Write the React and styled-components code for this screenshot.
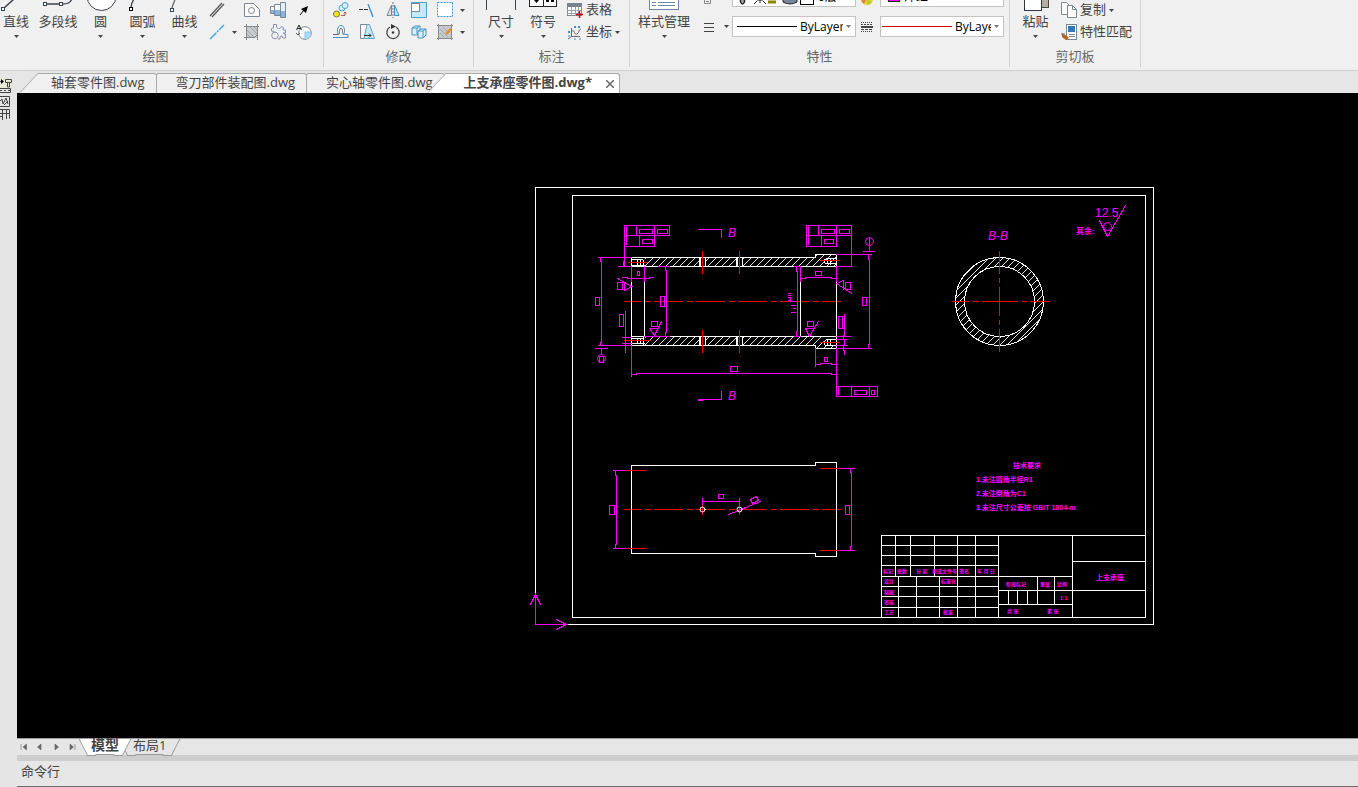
import { useState } from "react";
import styled, { createGlobalStyle } from "styled-components";

const GlobalStyle = createGlobalStyle`
  * {
    box-sizing: border-box;
  }

  body {
    margin: 0;
    font-family: "Open Sans", "Noto Sans CJK SC", sans-serif;
    font-size: 13px;
    color: #444;
    background: #e6e6e6;
  }

  button,
  select {
    font: inherit;
    color: inherit;
  }
`;

const AppStyle = styled.div`
  display: flex;
  flex-direction: column;
  min-height: 100vh;
`;

const Ribbon = styled.header`
  display: flex;
  height: 71px;
  background: #f0f0f0;
  border-bottom: 1px solid #d0d0d0;
  overflow: hidden;
`;

const Panel = styled.section`
  display: flex;
  flex-direction: column;
  flex: none;
  width: ${(p) => p.$w}px;
  height: 67px;
  border-right: 1px solid #d4d4d4;
`;

const PanelBody = styled.div`
  display: flex;
  height: 47px;
  padding-left: ${(p) => p.$pad || 0}px;
`;

const Caption = styled.div`
  height: 20px;
  line-height: 18px;
  padding-right: ${(p) => p.$shift || 0}px;
  text-align: center;
  color: #666;
`;

const PlainButton = styled.button`
  display: flex;
  align-items: center;
  padding: 0;
  border: 0;
  background: transparent;
  white-space: nowrap;
`;

const BigButton = styled(PlainButton)`
  flex: none;
  flex-direction: column;
  width: ${(p) => p.$w}px;
  height: 42px;

  > svg:first-child {
    flex: none;
    width: 40px;
    height: 13px;
  }

  span {
    height: 18px;
    margin-bottom: 4px;
    line-height: 16px;
  }
`;

const IconGrid = styled.div`
  display: grid;
  grid-template-columns: ${(p) => p.$cols};
  grid-template-rows: 20px 24px;
  margin-left: ${(p) => p.$ml}px;
`;

const IconButton = styled(PlainButton)`
  gap: 7px;
`;

const TextTools = styled.div`
  display: grid;
  grid-template-rows: 20px 24px;
  justify-items: start;
  margin-left: ${(p) => p.$ml || 0}px;
`;

const TextButton = styled(PlainButton)`
  gap: 3px;

  span {
    padding-bottom: 2px;
    line-height: 16px;
  }
`;

const PropGrid = styled.div`
  display: grid;
  grid-template-columns: 28px 124px 24px 124px;
  grid-template-rows: 7px 21px;
  row-gap: 9px;
  align-items: end;
  margin-left: 6px;
  overflow: hidden;
`;

const PropIcon = styled.div`
  display: flex;
  align-items: center;
  justify-content: ${(p) => (p.$center ? "center" : "space-between")};
  height: 21px;
  padding-right: ${(p) => (p.$center ? 2 : 3)}px;
`;

const Combo = styled.label`
  display: flex;
  align-items: center;
  gap: 3px;
  height: 21px;
  padding: 0 4px;
  padding-left: ${(p) => p.$pl}px;
  border: 1px solid #c3c3c3;
  background: #fff;
  overflow: hidden;

  > svg {
    flex: none;
  }

  select {
    flex: 1;
    min-width: 0;
    height: 19px;
    padding: 0;
    border: 0;
    appearance: none;
    background: transparent;
    color: #000;
    font-size: 12px;
    line-height: 18px;
  }
`;

const Work = styled.div`
  display: flex;
  flex: 1;
`;

const Rail = styled.aside`
  flex: none;
  width: 17px;
  padding-top: 7px;
  background: #e5e5e5;
`;

const Main = styled.main`
  display: flex;
  flex-direction: column;
  flex: 1;
  min-width: 0;
`;

const FileTabs = styled.nav`
  display: flex;
  align-items: flex-end;
  height: 22px;
  padding-left: 20px;
  background: #e6e6e6;
  overflow: hidden;
`;

const FileTab = styled.button`
  position: relative;
  z-index: ${(p) => p.$z};
  display: flex;
  align-items: center;
  height: 20px;
  padding: 0 11px 2px ${(p) => (p.$first ? 14 : 19)}px;
  border: 1px solid #a9a9a9;
  border-width: 1px 1px 0 0;
  border-top-right-radius: 3px;
  background: ${(p) => (p.$active ? "#fff" : "#f0f0f0")};
  font-weight: ${(p) => (p.$active ? 700 : 400)};
  line-height: 17px;
  white-space: nowrap;

  &::before {
    content: "";
    position: absolute;
    top: -1px;
    left: -9px;
    width: 18px;
    height: 20px;
    border: 1px solid #a9a9a9;
    border-width: 1px 0 0 1px;
    background: inherit;
    transform: skewX(-43deg);
  }

  span {
    position: relative;
  }
`;

const CloseMark = styled.svg`
  width: 8px;
  height: 8px;
  margin: 2px -6px 0 14px;
`;

const Canvas = styled.div`
  display: flex;
  flex: 1;
  background: #000;

  svg {
    flex: 1;
    width: 100%;
    height: auto;
    min-width: 0;
  }
`;

const Sheets = styled.nav`
  display: flex;
  height: 17px;
  border-top: 1px solid #9a9a9a;
  background: #e6e6e6;
`;

const SheetNav = styled.div`
  display: flex;
  align-items: center;
  gap: 7px;
  width: 66px;
  padding-left: 2px;
`;

const SheetTab = styled.button`
  position: relative;
  z-index: ${(p) => (p.$active ? 1 : 0)};
  height: 16px;
  margin-left: 4px;
  padding: 0 ${(p) => (p.$active ? 4 : 6)}px;
  border: 0;
  border-bottom: 1px solid #999;
  background: ${(p) => (p.$active ? "#fff" : "#e6e6e6")};
  font-size: ${(p) => (p.$active ? 14 : 13)}px;
  font-weight: ${(p) => (p.$active ? 700 : 400)};
  line-height: 12px;

  &::before,
  &::after {
    content: "";
    position: absolute;
    top: 0;
    width: 8px;
    height: 16px;
    border-bottom: 1px solid #999;
    background: inherit;
  }

  &::before {
    left: -4px;
    border-left: 1px solid #999;
    transform: skewX(27deg);
  }

  &::after {
    right: -4px;
    border-right: 1px solid #999;
    transform: skewX(-27deg);
  }

  span {
    position: relative;
    z-index: 1;
    display: block;
    height: 15px;
  }
`;

const Splitter = styled.div`
  height: 6px;
  background: #cdcdcd;
`;

const CommandLine = styled.div`
  height: 26px;
  padding-left: 4px;
  border-bottom: 1px solid #6d6d6d;
  line-height: 20px;
`;

const Caret = ({ color = "#444" }) => (
  <svg width="5" height="3" viewBox="0 0 5 3">
    <path d="M0 0h5L2.5 3z" fill={color} />
  </svg>
);

const Icon = ({ children }) => (
  <svg width="16" height="16" viewBox="0 0 16 16" fill="none" stroke="#7d8794">
    {children}
  </svg>
);

const BigIcon = ({ children }) => (
  <svg viewBox="0 0 40 13" fill="none" stroke="#3c424c">
    {children}
  </svg>
);

const drawBig = [
  {
    name: "直线",
    w: 32,
    icon: (
      <>
        <path d="M8 8L18 -1" strokeWidth="1.5" />
        <rect x="5.500" y="7.500" width="3" height="3" fill="#fff" />
      </>
    ),
  },
  {
    name: "多段线",
    w: 52,
    noArrow: true,
    icon: (
      <>
        <path d="M8 4h16M24 4c6 0 8 -1 10 -5" strokeWidth="1.3" />
        <rect x="5.500" y="2.500" width="3" height="3" fill="#fff" />
        <rect x="21.500" y="2.500" width="3" height="3" fill="#fff" />
      </>
    ),
  },
  {
    name: "圆",
    w: 33,
    icon: <circle cx="20.500" cy="-4" r="14.500" fill="#fff" />,
  },
  {
    name: "圆弧",
    w: 51,
    icon: (
      <>
        <path d="M8 8c0-3 1-6 3-9" strokeWidth="1.3" />
        <rect x="6.500" y="7.500" width="3" height="3" fill="#fff" stroke="#000" />
      </>
    ),
  },
  {
    name: "曲线",
    w: 33,
    icon: (
      <>
        <path d="M7 9c0-4 2-5 3-10" strokeWidth="1.3" stroke="#666" />
        <rect x="5.500" y="8.500" width="3" height="3" fill="#fff" />
      </>
    ),
  },
];

const drawSmall = [
  {
    name: "平行线",
    icon: <path d="M1 14L13 1M3 15L15 2" stroke="#555" strokeWidth="1.2" />,
  },
  {
    name: "轮廓",
    icon: (
      <>
        <path d="M.5 1.500h9l6 6v7H.5z" fill="#fafafa" />
        <circle cx="7.500" cy="8.500" r="3" />
      </>
    ),
  },
  {
    name: "轴",
    icon: (
      <>
        <path d="M.5 4.500h4v7h-4zM4.500 2.500h6v11h-6z" fill="#f4f8fc" />
        <path d="M10.500 .5h5v15h-5z" fill="#e6f1fa" />
        <path d="M1 8h3v3H1zM5 8h5v5H5zM11 9h4v6h-4z" fill="#86b4de" stroke="none" />
      </>
    ),
  },
  {
    name: "箭头",
    icon: (
      <>
        <path d="M4 13L8 8" stroke="#000" />
        <path d="M12 4L10 11 5 7z" fill="#000" stroke="none" />
      </>
    ),
  },
  {
    name: "中心线",
    arrow: true,
    icon: (
      <path d="M1 15L15 1" stroke="#2fa8e0" strokeWidth="1.4" strokeDasharray="9 1 2 1" />
    ),
  },
  {
    name: "剖面线",
    icon: (
      <>
        <rect x="2" y="2" width="11" height="12" fill="#c6cacc" stroke="none" />
        <path d="M0 2.500h15M2.500 0v16M0 13.500h10M13.500 0v16M10 14l4-4" stroke="#888" />
        <path d="M3 6l7 7M3 10l3 3M6 3l7 7M10 3l3 3" stroke="#999" strokeWidth=".7" />
      </>
    ),
  },
  {
    name: "齿轮",
    icon: (
      <>
        <path
          d="M1.500 7V4.500l2-.5V.5h3V3l2 2 2-1 1-1.500 2 1L13 6h2.500v3H13l1 1h1.500v4H13l-1-2-2 1v2H8"
          fill="#eef1f8"
          stroke="#8792a8"
        />
        <path d="M1.500 7l3 1" stroke="#8792a8" />
        <circle cx="5" cy="11.500" r="3.300" fill="#f0f0f0" stroke="#8792a8" />
      </>
    ),
  },
  {
    name: "局部放大",
    icon: (
      <>
        <circle cx="9" cy="9" r="6.300" fill="#f7f9fb" />
        <path d="M9 8h6a6 6 0 0 1-6 7z" fill="#a5dcf7" stroke="none" />
        <path d="M9 15V8h6" stroke="#8fc3dd" />
        <path d="M.5 6L3 1l2.500 5M1.500 4.500h3" stroke="#222" />
        <path d="M0 9l2 2 2-2" stroke="#555" />
      </>
    ),
  },
];

const modifySmall = [
  {
    name: "复制对象",
    icon: (
      <>
        <circle cx="9" cy="6" r="3" fill="#d7effb" stroke="#4ea3d6" />
        <circle cx="12" cy="3.500" r="3" fill="#d7effb" stroke="#4ea3d6" />
        <circle cx="3.500" cy="12" r="3" fill="#ffe800" stroke="#777" />
        <path d="M8 13.500h4V10M10.500 11.500L12 10l1.500 1.500" stroke="#a55" />
      </>
    ),
  },
  {
    name: "修剪",
    icon: (
      <>
        <path d="M0 7.500h10" stroke="#333" strokeDasharray="4 1" />
        <path d="M9 2l5 13" stroke="#2786c8" strokeWidth="1.200" />
      </>
    ),
  },
  {
    name: "镜像",
    icon: (
      <>
        <path d="M6.500 3v10.500H2z" fill="#ddd" />
        <path d="M9.500 3v10.500H14z" fill="#c5e6f8" stroke="#4590c0" />
        <path d="M8 0v16" stroke="#777" strokeDasharray="2 1" />
      </>
    ),
  },
  {
    name: "缩放",
    icon: (
      <>
        <rect x=".5" y=".5" width="15" height="15" fill="#c6e9fa" stroke="#5a9dc8" />
        <rect x=".5" y="1.500" width="8" height="8" fill="#fff" />
      </>
    ),
  },
  {
    name: "拉伸",
    arrow: true,
    icon: (
      <rect x=".5" y=".5" width="15" height="14" fill="#fff" stroke="#4795c8" strokeDasharray="2 1" />
    ),
  },
  {
    name: "偏移",
    icon: (
      <>
        <path d="M0 13.500h15v-3h-3c-2 0 0-3-.5-5s-1-4-3.500-4-3 2-3.500 4 1.500 5-.5 5H0" stroke="#4e8eb8" />
        <path d="M0 10.500h5c3 0 0-6 3-6s0 6 3 6" stroke="#666" />
      </>
    ),
  },
  {
    name: "移动边",
    icon: (
      <>
        <path d="M1.500 .5h7v14h-7z" fill="#f8f8f8" />
        <path d="M8 .5h2.500l5 14H5z" fill="#c6e9f9" stroke="#65a5c9" />
        <path d="M5 11.500h7M10 9.500l2 2-2 2" stroke="#333" />
      </>
    ),
  },
  {
    name: "旋转",
    icon: (
      <>
        <path d="M5 3a6.200 6.200 0 1 0 6 0" stroke="#444" strokeWidth="1.300" />
        <circle cx="8" cy="8.500" r="1.200" fill="#333" stroke="none" />
        <path d="M6 0l5 2.500L6 5z" fill="#333" stroke="none" />
      </>
    ),
  },
  {
    name: "阵列",
    icon: (
      <>
        <path d="M1 4l3-2h5v6l-3 3H1zM1 4h5v6M6 4l3-2" fill="#d9f1fc" stroke="#4b94bf" />
        <path d="M7 7l3-2h5v6l-3 3H7zM7 7h5v6M12 7l3-2" fill="#d9f1fc" stroke="#4b94bf" />
      </>
    ),
  },
  {
    name: "编辑填充",
    arrow: true,
    icon: (
      <>
        <rect x="2" y="2" width="12" height="12" fill="#c6cacc" stroke="none" />
        <path d="M0 1.500h16M1.500 0v16M0 14.500h16M14.500 0v16" stroke="#888" />
        <path d="M3 5l8 8M3 9l4 4M6 3l4 4" stroke="#999" strokeWidth=".7" />
        <path d="M9 10l5-5" stroke="#e0912c" strokeWidth="2.500" />
      </>
    ),
  },
];

const SmallTools = ({ items }) =>
  items.map((t) => (
    <IconButton key={t.name} type="button" aria-label={t.name}>
      <Icon>{t.icon}</Icon>
      {t.arrow && <Caret />}
    </IconButton>
  ));

const BigTool = ({ name, w, icon, noArrow }) => (
  <BigButton type="button" $w={w}>
    <BigIcon>{icon}</BigIcon>
    <span>{name}</span>
    {!noArrow && <Caret />}
  </BigButton>
);

const TopRibbon = () => (
  <Ribbon>
    <Panel $w={324}>
      <PanelBody>
        {drawBig.map((t) => (
          <BigTool key={t.name} {...t} />
        ))}
        <IconGrid $ml={8} $cols="35px 26px 26px 26px">
          <SmallTools items={drawSmall} />
        </IconGrid>
      </PanelBody>
      <Caption $shift={12}>绘图</Caption>
    </Panel>

    <Panel $w={150}>
      <PanelBody>
        <IconGrid $ml={9} $cols="26px 26px 26px 26px 28px">
          <SmallTools items={modifySmall} />
        </IconGrid>
      </PanelBody>
      <Caption>修改</Caption>
    </Panel>

    <Panel $w={156}>
      <PanelBody $pad={6}>
        <BigTool name="尺寸" w={42} icon={<path d="M5.500 0v10M34.500 0v10" />} />
        <BigTool
          name="符号"
          w={42}
          icon={
            <>
              <rect x="6.500" y="-8" width="27" height="14.500" fill="#fff" stroke="#222" />
              <path d="M20.500 0v6" stroke="#222" />
              <path d="M11 0h5l-2.500 3zM23 0h3v2h-3zM28 0h3v2h-3z" fill="#000" stroke="none" />
            </>
          }
        />
        <TextTools $ml={3}>
          <TextButton type="button">
            <Icon>
              <rect x=".5" y="1.500" width="14" height="12" fill="#fff" />
              <path d="M0 1h15v4H0z" fill="#7b838d" stroke="none" />
              <path d="M0 8.500h15M0 11.500h15M4.500 5v9M8.500 5v9M11.500 5v9" stroke="#9aa2ac" />
              <path d="M12.500 9v7M9 12.500h7" stroke="#b5121b" strokeWidth="1.500" />
            </Icon>
            <span>表格</span>
          </TextButton>
          <TextButton type="button">
            <Icon>
              <path d="M4.500 4v8.500H13M4.500 12.500L1 15M5 7c3-2 2 5 5 3s1-4 4-5" stroke="#667" />
              <path d="M1 7l2 2M3 7l-2 2M7 2l2 2M9 2L7 4M11 2l2 2M13 2l-2 2M1 12h2M7 15h2M12 15h2" stroke="#3990cc" />
            </Icon>
            <span>坐标</span>
            <Caret />
          </TextButton>
        </TextTools>
      </PanelBody>
      <Caption>标注</Caption>
    </Panel>

    <Panel $w={380}>
      <PanelBody>
        <BigTool
          name="样式管理"
          w={68}
          icon={
            <>
              <rect x="5.500" y="-9" width="29" height="18.500" fill="#fff" stroke="#6d88a6" />
              <path d="M8 2.500h4M14 2.500h17M8 5.500h4M14 5.500h17" stroke="#6d88a6" />
            </>
          }
        />
        <PropGrid>
          <PropIcon>
            <svg width="8" height="18" viewBox="0 0 8 18" fill="none" stroke="#888">
              <path d="M.5 0v15.500h6V0M2 13.500h3M2 11.500h3" />
            </svg>
          </PropIcon>
          <Combo $pl={6}>
            <svg width="76" height="19" viewBox="0 0 76 19" fill="none" stroke="#222">
              <path d="M1.500 10v5q2 4 4 0v-5" fill="#aaa" strokeWidth="1.500" />
              <path d="M15 17l3-3M18 13h6M24 14l3 3M21 13v3" />
              <path d="M29 15h8" stroke="#8b8500" strokeWidth="3" />
              <path d="M44 12h14v3q-7 4-14 0z" fill="#76879b" />
              <rect x="61.500" y="5" width="13" height="12.500" fill="#fff" stroke="#000" />
            </svg>
            <select aria-label="图层">
              <option>0层</option>
            </select>
          </Combo>
          <PropIcon $center>
            <svg width="12" height="18" viewBox="0 0 12 18">
              <circle cx="6" cy="11" r="6" fill="#f2d21c" />
              <path d="M0 11a6 6 0 0 0 3 5l3-5z" fill="#e8873a" />
              <path d="M6 11v6a6 6 0 0 0 5-3z" fill="#b5cc3a" />
            </svg>
          </PropIcon>
          <Combo $pl={7}>
            <svg width="13" height="13" viewBox="0 0 13 13">
              <rect x=".5" y=".5" width="11" height="11" fill="#f0f" stroke="#222" />
            </svg>
            <select aria-label="颜色">
              <option>洋红</option>
            </select>
          </Combo>

          <PropIcon>
            <svg width="10" height="10" viewBox="0 0 10 10">
              <path d="M0 1.500h10M0 5.500h10M0 9.500h10" stroke="#444" />
            </svg>
            <Caret />
          </PropIcon>
          <Combo $pl={4}>
            <svg width="60" height="3" viewBox="0 0 60 3">
              <path d="M0 1.500h60" stroke="#000" />
            </svg>
            <select aria-label="线型">
              <option>ByLayer</option>
            </select>
            <Caret color="#777" />
          </Combo>
          <PropIcon $center>
            <svg width="12" height="12" viewBox="0 0 12 12" stroke="#444">
              <path d="M0 1.500h12M0 10.500h12" strokeDasharray="1 1" />
              <path d="M0 3.500h12" strokeDasharray="2 1" />
              <path d="M0 6h12" strokeWidth="2" />
              <path d="M0 8.500h12" strokeDasharray="3 1" />
            </svg>
          </PropIcon>
          <Combo $pl={1}>
            <svg width="70" height="3" viewBox="0 0 70 3">
              <path d="M0 1.500h70" stroke="#d00000" />
            </svg>
            <select aria-label="线宽">
              <option>ByLayer</option>
            </select>
            <Caret color="#777" />
          </Combo>
        </PropGrid>
      </PanelBody>
      <Caption>特性</Caption>
    </Panel>

    <Panel $w={131}>
      <PanelBody>
        <BigTool
          name="粘贴"
          w={51}
          icon={
            <>
              <rect x="24.500" y="-6" width="8" height="13.500" fill="#b9ada2" stroke="#444" />
              <rect x="8.500" y="-6" width="17" height="16.500" fill="#fff" stroke="#2e3644" />
            </>
          }
        />
        <TextTools>
          <TextButton type="button">
            <Icon>
              <path d="M.5 .5h5l3 3v9h-8z" fill="#fff" />
              <path d="M6.500 3.500h5l4 4v8h-9z" fill="#fff" />
              <path d="M11.500 3.500v4h4" />
            </Icon>
            <span>复制</span>
            <Caret />
          </TextButton>
          <TextButton type="button">
            <Icon>
              <rect x="5.500" y=".5" width="10" height="15" fill="#fff" />
              <path d="M7 2h7v6H7z" fill="#3674b4" stroke="none" />
              <path d="M8 10.500h6M8 12.500h6" />
              <path d="M1 9l5 3 2 2-3 2-4-3z" fill="#b5651d" stroke="none" />
              <path d="M0 10h4" stroke="#777" />
            </Icon>
            <span>特性匹配</span>
          </TextButton>
        </TextTools>
      </PanelBody>
      <Caption>剪切板</Caption>
    </Panel>
  </Ribbon>
);

const WHITE = "#fff";
const MAGENTA = "#f0f";
const RED = "#f00";

const range = (from, to, step) => {
  const list = [];
  for (let v = from; v < to; v += step) list.push(v);
  return list;
};

const box = (x1, y1, x2, y2) => `M${x1} ${y1}H${x2}V${y2}H${x1}Z`;

const notes = [
  [1013, 468, "技术要求"],
  [976, 482, "1.未注圆角半径R1"],
  [976, 496, "2.未注倒角为C1"],
  [976, 510, "3.未注尺寸公差按 GB/T 1804-m"],
  [1096, 580, "上支承座"],
];

const blockTexts = [
  [883, 573, "标记"],
  [897, 573, "处数"],
  [916, 573, "分 区"],
  [932, 573, "更改文件号"],
  [959, 573, "签名"],
  [977, 573, "年 月 日"],
  [884, 583, "设计"],
  [941, 583, "标准化"],
  [884, 594, "制图"],
  [884, 604, "审核"],
  [884, 614, "工艺"],
  [943, 614, "批准"],
  [1006, 586, "阶段标记"],
  [1040, 586, "重量"],
  [1057, 586, "比例"],
  [1060, 600, "1:1"],
  [1007, 613, "共 张"],
  [1047, 613, "第 张"],
];

const Drawing = () => (
  <svg viewBox="17 93 1341 645" role="img" aria-label="上支承座零件图">
    <defs>
      <clipPath id="walls">
        <path d="M644 257H699V266H644zM705 257H736V266H705zM742 257H815V254H836V266H823V266H742zM644 336H699V345H644zM705 336H736V345H705zM742 336H823V345H836V348H815V345H742z" />
      </clipPath>
      <clipPath id="ring">
        <path
          clipRule="evenodd"
          d="M955 301a44 44 0 1 0 88 0a44 44 0 1 0 -88 0zM964 301a35 35 0 1 0 70 0a35 35 0 1 0 -70 0z"
        />
      </clipPath>
    </defs>

    <g
      transform="translate(.5 .5)"
      fill="none"
      shapeRendering="crispEdges"
      strokeLinecap="square"
    >
      {/* 图框 */}
      <path stroke={WHITE} d={box(535, 187, 1153, 624) + box(572, 195, 1145, 617)} />
      <path stroke={MAGENTA} d="M535 594V624H566M530 604L535 594L540 604M556 619L566 624L556 629" />

      {/* 主视图 */}
      <g clipPath="url(#walls)" stroke={WHITE} strokeWidth=".9">
        {range(630, 850, 7).map((x) => (
          <path key={x} d={`M${x - 4} 270L${x + 14} 252M${x - 4} 349L${x + 14} 331`} />
        ))}
      </g>
      <path
        stroke={RED}
        strokeLinecap="butt"
        strokeDasharray="29 4 6 3"
        strokeDashoffset="12"
        d="M623.500 301H840M623.500 509H840"
      />
      <path
        stroke={WHITE}
        d="M631 257H815V254H836V266H631ZM631 336H836V348H815V345H631ZM631 281V336M644 281V336M800 281V336M836 281V336M699 257V266M700 257V266M705 257V266M736 257V266M737 257V266M742 257V266M699 336V345M700 336V345M705 336V345M736 336V345M737 336V345M742 336V345"
      />
      <path
        stroke={WHITE}
        d="M631 259H642M631 265H644M637 259V265M640 260V265M643 260V265M631 338H642M631 343H644M637 338V343M640 338V343M643 337V345M836 258H826L823 260L825 263H836M827 258V263M830 258V264M836 339H826L823 342L825 345H836M827 340V345M830 339V345"
      />
      <path
        stroke={RED}
        d="M628 262H647M624 340H650M820 260H839M820 342H839M702 251V273M739 251V273M702 330V352M739 330V352"
      />
      <path
        stroke={MAGENTA}
        d={
          box(624, 225, 669, 235) +
          box(624, 235, 654, 246) +
          box(639, 229, 652, 233) +
          box(657, 229, 667, 233) +
          box(642, 239, 652, 243) +
          box(595, 297, 599, 305) +
          box(599, 356, 603, 362) +
          box(617, 282, 622, 289) +
          box(637, 271, 639, 275) +
          box(660, 296, 664, 306) +
          box(651, 321, 657, 326) +
          box(619, 314, 623, 326) +
          box(730, 366, 737, 371) +
          "M626 226V234M636 225V235M654 225V235M626 236V244M639 235V246M624 246V266M623 261V266M618 266H631M658 266H669" +
          "M598 257H631M598 345H631M600 257V261H601V342H600V345M595 348H607M601 348V354" +
          "M617 278L631 286L624 290V282M631 266V281M644 266V281M622 277H627V278H644M644 278H649V277H653" +
          "M665 266V270H666V332H665V336M644 336H669M649 328H657M649 328L654 335L661 321" +
          "M625 311V352M622 337H631M622 343H631M631 345V376M631 374H636V373H831V374H836" +
          "M698 229H721V237M698 399H721V391M698 400H702"
        }
      />
      <circle cx="601" cy="358" r="4" stroke={MAGENTA} shapeRendering="auto" />
      <path
        stroke={MAGENTA}
        d={
          box(806, 225, 851, 235) +
          box(806, 235, 836, 246) +
          box(821, 229, 834, 233) +
          box(839, 229, 849, 233) +
          box(824, 239, 833, 243) +
          box(862, 297, 866, 305) +
          box(815, 271, 821, 275) +
          box(845, 282, 850, 289) +
          box(807, 321, 813, 326) +
          box(838, 316, 842, 328) +
          box(824, 357, 827, 361) +
          box(836, 386, 877, 396) +
          box(854, 390, 866, 394) +
          box(871, 390, 874, 394) +
          "M808 226V234M818 225V235M836 225V235M808 236V244M821 235V246M851 235V266M836 266H851" +
          "M869 245V251M863 251H874M869 238V245M836 254H871M836 348H871M868 254V259H869V344H868V348" +
          "M794 266H800M794 336H800M796 266V271H797V331H796V336M800 266V281M836 266V281M800 278H805V277H831V278H836" +
          "M836 283L843 280V289M836 283L851 293M805 328H813M805 328L809 336L818 321" +
          "M788 293H790M788 295H790M788 297H790V301M788 300H790M791 301H795M791 305H795M793 308H795M791 312H795" +
          "M844 314V335H843V339H844V345H843V350H844V354M836 336H850M836 339H846M836 345H847" +
          "M815 348V366M815 364H820V363H831V364H836M836 348V386M838 387V394M851 386V396M869 386V396"
        }
      />
      <circle cx="869" cy="241" r="4" stroke={MAGENTA} shapeRendering="auto" />

      {/* B-B 剖面 */}
      <g clipPath="url(#ring)" stroke={WHITE} strokeWidth=".9">
        {range(860, 1060, 7).map((x) => (
          <path key={x} d={`M${x} 351L${x + 100} 251`} />
        ))}
      </g>
      <circle cx="999" cy="301" r="44" stroke={WHITE} />
      <circle cx="999" cy="301" r="35" stroke={WHITE} />
      <path
        stroke={RED}
        d="M952 301H968M973 301H978M982 301H1017M1022 301H1026M1030 301H1049M999 251V273M999 278V282M999 287V315M999 320V324M999 329V351"
      />
      <path stroke={MAGENTA} d="M1099 220L1107 236L1125 205" />
      <circle cx="1107" cy="226" r="4" stroke={MAGENTA} shapeRendering="auto" />

      {/* 俯视图 */}
      <path stroke={WHITE} d="M631 465H815V462H836V556H815V553H631Z" />
      <path
        stroke={MAGENTA}
        d={
          box(609, 505, 614, 514) +
          box(845, 505, 849, 514) +
          box(718, 494, 723, 498) +
          "M613 470H625M613 548H625M615 470V475H616V544H615V548M838 468H854M838 550H854M850 468V472H851V546H850V550" +
          "M702 498V506M739 498V506M702 501H739M728 514L760 501M750 499L756 496L758 500L752 503Z"
        }
      />
      <path
        stroke={RED}
        d="M625 470H646M625 548H646M820 468H838M820 550H838M702 505V514M739 505V514"
      />
      <circle cx="702" cy="509" r="2.500" stroke={WHITE} shapeRendering="auto" />
      <circle cx="739" cy="509" r="2.500" stroke={WHITE} shapeRendering="auto" />

      {/* 标题栏 */}
      <path
        stroke={WHITE}
        d="M1145 535H881V617M881 545H998M881 555H998M881 565H998M881 576H1072M881 586H998M881 596H998M881 607H998M895 535V576M910 535V576M934 535V576M957 535V617M975 535V617M998 535V617M898 576V617M916 576V617M939 576V617M998 590H1072M998 604H1072M1037 576V604M1054 576V604M1008 590V604M1017 590V604M1027 590V604M1072 535V617M1072 561H1145M1072 590H1145"
      />
    </g>

    <g fill={MAGENTA} fontFamily='"Liberation Sans", "Noto Sans CJK SC", sans-serif'>
      <g fontSize="12" fontStyle="italic">
        <text x="728" y="237">B</text>
        <text x="728" y="400">B</text>
        <text x="988" y="240">B-B</text>
      </g>
      <text x="1095" y="217" fontSize="12">12.5</text>
      <text x="1076" y="234" fontSize="8" fontWeight="700">其余:</text>
      <g fontSize="7" fontWeight="700">
        {notes.map(([x, y, t]) => (
          <text key={t} x={x} y={y}>
            {t}
          </text>
        ))}
      </g>
      <g fontSize="5" fontWeight="700">
        {blockTexts.map(([x, y, t]) => (
          <text key={t} x={x} y={y}>
            {t}
          </text>
        ))}
      </g>
    </g>
  </svg>
);

const files = [
  "轴套零件图.dwg",
  "弯刀部件装配图.dwg",
  "实心轴零件图.dwg",
  "上支承座零件图.dwg*",
];

const sheetArrows = [
  ["第一页", "M2 2v6M7.500 2v6L4 5z"],
  ["上一页", "M6 2v6L2.500 5z"],
  ["下一页", "M4 2v6l3.500-3z"],
  ["最后页", "M3 2v6l3.500-3zM8 2v6"],
];

const App = () => {
  const [file, setFile] = useState(3);
  const [sheet, setSheet] = useState("模型");

  return (
    <AppStyle>
      <GlobalStyle />
      <TopRibbon />
      <Work>
        <Rail>
          <svg width="12" height="43" viewBox="0 0 12 43" fill="none" stroke="#444">
            <path d="M0 0h12v10H0z" fill="#e7e9d4" stroke="none" />
            <path d="M0 3.500h2M5.500 1.500h6v3h-6zM7.500 4v5h2V4" />
            <path d="M1 1l3 2.500L1 6z" fill="#000" stroke="none" />
            <path d="M0 10.500h10.500v4H0M0 12.500h2M4 12.500h2M8 12.500h2" />
            <path d="M0 18.500h9.500v10H0M0 23l2-2 1 5 2-4 1-2 2 6M4 27l4-4" />
            <path d="M0 31.500h9.500v9M2.500 31v11M6.500 32v9M0 35.500h9M0 38.500h3" />
          </svg>
        </Rail>
        <Main>
          <FileTabs>
            {files.map((name, i) => (
              <FileTab
                key={name}
                type="button"
                $first={i === 0}
                $active={file === i}
                $z={file === i ? 9 : 4 - i}
                onClick={() => setFile(i)}
              >
                <span>{name}</span>
                {file === i && (
                  <CloseMark viewBox="0 0 8 8">
                    <path d="M0 0l8 8M8 0L0 8" stroke="#666" strokeWidth="1.500" />
                  </CloseMark>
                )}
              </FileTab>
            ))}
          </FileTabs>
          <Canvas>
            <Drawing />
          </Canvas>
          <Sheets>
            <SheetNav>
              {sheetArrows.map(([name, d]) => (
                <PlainButton key={name} type="button" aria-label={name}>
                  <svg width="9" height="10" viewBox="0 0 9 10">
                    <path d={d} fill="#666" stroke="#666" strokeWidth=".6" />
                  </svg>
                </PlainButton>
              ))}
            </SheetNav>
            {["模型", "布局1"].map((name) => (
              <SheetTab
                key={name}
                type="button"
                $active={sheet === name}
                onClick={() => setSheet(name)}
              >
                <span>{name}</span>
              </SheetTab>
            ))}
          </Sheets>
          <Splitter />
          <CommandLine>命令行</CommandLine>
        </Main>
      </Work>
    </AppStyle>
  );
};

export default App;
